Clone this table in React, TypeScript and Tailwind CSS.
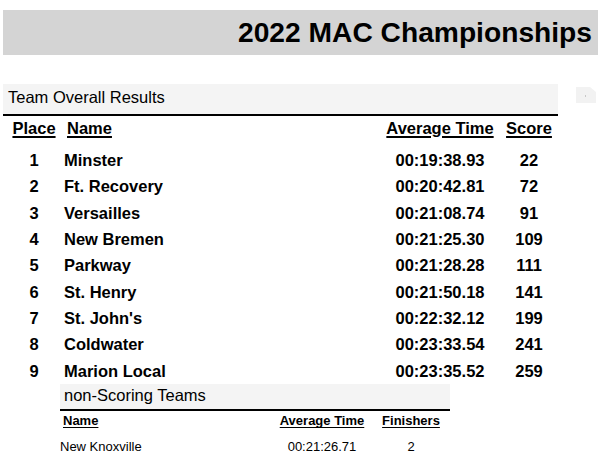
import * as React from 'react';

type TeamRow = {
  place: number;
  name: string;
  time: string;
  score: number;
};

const teams: TeamRow[] = [
  { place: 1, name: 'Minster', time: '00:19:38.93', score: 22 },
  { place: 2, name: 'Ft. Recovery', time: '00:20:42.81', score: 72 },
  { place: 3, name: 'Versailles', time: '00:21:08.74', score: 91 },
  { place: 4, name: 'New Bremen', time: '00:21:25.30', score: 109 },
  { place: 5, name: 'Parkway', time: '00:21:28.28', score: 111 },
  { place: 6, name: 'St. Henry', time: '00:21:50.18', score: 141 },
  { place: 7, name: "St. John's", time: '00:22:32.12', score: 199 },
  { place: 8, name: 'Coldwater', time: '00:23:33.54', score: 241 },
  { place: 9, name: 'Marion Local', time: '00:23:35.52', score: 259 },
];

const nonScoring = [{ name: 'New Knoxville', time: '00:21:26.71', finishers: 2 }];

const App: React.FC = () => {
  return (
    <div className="h-[464px] w-[598px] overflow-hidden bg-white pt-[10px] font-['Liberation_Sans',Arial,sans-serif] text-black">
      {/* Title bar */}
      <div className="ml-[3px] flex h-[45px] items-center justify-end bg-[#d4d4d4] pr-[6px]">
        <h1 className="text-[28.2px] font-bold leading-none">2022 MAC Championships</h1>
      </div>

      {/* Team overall results */}
      <div className="mt-[29px] flex items-start">
        <div className="ml-[3px] w-[555px]">
          <div className="flex h-[32px] items-center border-b-2 border-black bg-[#f4f4f4] pb-[3px] pl-[5px] text-[16.5px]">
            Team Overall Results
          </div>

          <div className="grid h-[24px] grid-cols-[5px_52px_320px_120px_58px] items-center text-[16.5px] font-bold">
            <span />
            <span className="text-center underline decoration-2 underline-offset-[2px]">Place</span>
            <span className="pl-[7px] underline decoration-2 underline-offset-[2px]">Name</span>
            <span className="text-center underline decoration-2 underline-offset-[2px]">Average Time</span>
            <span className="text-center underline decoration-2 underline-offset-[2px]">Score</span>
          </div>

          <div className="pt-[7px]">
            {teams.map((t) => (
              <div
                className="grid h-[26.375px] grid-cols-[5px_52px_320px_120px_58px] items-center text-[16.5px] font-bold"
                key={t.place}
              >
                <span />
                <span className="text-center">{t.place}</span>
                <span className="pl-[4px]">{t.name}</span>
                <span className="text-center">{t.time}</span>
                <span className="text-center">{t.score}</span>
              </div>
            ))}
          </div>
        </div>

        {/* faint placeholder icon */}
        <svg className="ml-[17px] mt-[2px]" height="18" viewBox="0 0 22 18" width="22">
          <path d="M1 1h14l6 5v11H1z" fill="#f2f2f2" />
          <rect fill="#c8c8c8" height="2" width="1" x="10" y="9" />
        </svg>
      </div>

      {/* Non-scoring teams */}
      <div className="ml-[60px] w-[390px]">
        <div className="flex h-[27px] items-center border-b-2 border-black bg-[#f4f4f4] pb-[3px] pl-[4px] text-[16.5px]">
          non-Scoring Teams
        </div>
        <div className="grid h-[19px] grid-cols-[212px_100px_78px] items-center text-[13px] font-bold">
          <span className="pl-[3px] underline underline-offset-[2px]">Name</span>
          <span className="text-center underline underline-offset-[2px]">Average Time</span>
          <span className="text-center underline underline-offset-[2px]">Finishers</span>
        </div>
        {nonScoring.map((n) => (
          <div className="mt-[6px] grid h-[20px] grid-cols-[212px_100px_78px] items-center text-[13px]" key={n.name}>
            <span>{n.name}</span>
            <span className="text-center">{n.time}</span>
            <span className="text-center">{n.finishers}</span>
          </div>
        ))}
      </div>
    </div>
  );
};

export default App;
